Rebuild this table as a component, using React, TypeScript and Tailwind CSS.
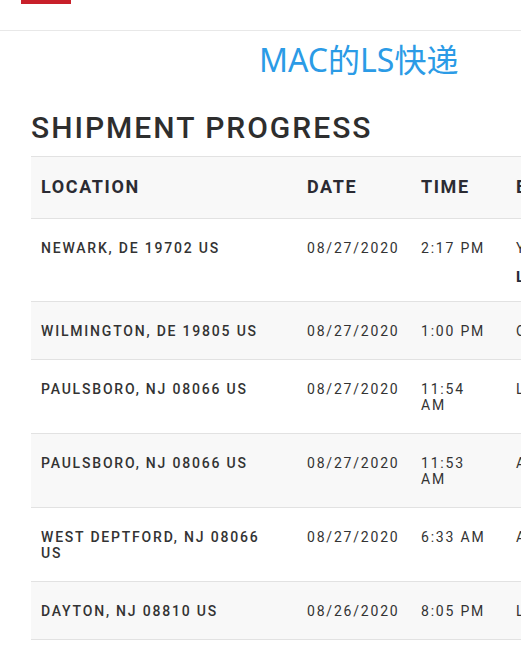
import React from "react";

type Row = {
  location: string;
  date: string;
  time: string;
  activity: string;
  note?: string;
};

const rows: Row[] = [
  { location: "NEWARK, DE 19702 US", date: "08/27/2020", time: "2:17 PM", activity: "YOUR PACKAGE WAS DELIVERED", note: "LEFT AT: FRONT DOOR" },
  { location: "WILMINGTON, DE 19805 US", date: "08/27/2020", time: "1:00 PM", activity: "OUT FOR DELIVERY" },
  { location: "PAULSBORO, NJ 08066 US", date: "08/27/2020", time: "11:54 AM", activity: "LOADED ON DELIVERY VEHICLE" },
  { location: "PAULSBORO, NJ 08066 US", date: "08/27/2020", time: "11:53 AM", activity: "ARRIVED AT FACILITY" },
  { location: "WEST DEPTFORD, NJ 08066 US", date: "08/27/2020", time: "6:33 AM", activity: "ARRIVED AT FACILITY" },
  { location: "DAYTON, NJ 08810 US", date: "08/26/2020", time: "8:05 PM", activity: "LEFT FACILITY" },
];

export default function App() {
  return (
    <div className="min-h-screen w-full overflow-hidden bg-white font-['Roboto',sans-serif]">
      {/* top bar */}
      <div className="h-[31px] border-b border-[#e8e8e8]">
        <div className="ml-[21px] h-[4px] w-[50px] bg-[#c8202a]" />
      </div>

      <h1 className="mt-[9px] pl-[259px] text-[32px] leading-[40px] text-[#2b9be6] font-['Noto_Sans','Noto_Sans_CJK_SC',sans-serif] whitespace-nowrap">
        MAC的LS快递
      </h1>

      <h2 className="mt-[30px] pl-[31px] text-[30px] leading-[36px] font-medium tracking-[2px] text-[#2e2e2e] whitespace-nowrap">
        SHIPMENT PROGRESS
      </h2>

      <div className="mt-[10px] pl-[31px]">
        <table className="w-[700px] table-fixed border-collapse text-left">
          <colgroup>
            <col className="w-[266px]" />
            <col className="w-[114px]" />
            <col className="w-[95px]" />
            <col className="w-[225px]" />
          </colgroup>
          <thead>
            <tr className="border-y border-[#e2e2e2] bg-[#f8f8f8]">
              {["LOCATION", "DATE", "TIME", "EVENT"].map((h) => (
                <th
                  key={h}
                  className="px-[10px] pt-[19px] pb-[21px] text-[18px] leading-[21px] font-bold tracking-[1.6px] text-[#2b2b33]"
                >
                  {h}
                </th>
              ))}
            </tr>
          </thead>
          <tbody className="text-[14px] leading-[16px] tracking-[1.8px] text-[#333]">
            {rows.map((r, i) => (
              <tr
                key={i}
                className={`border-b border-[#e2e2e2] align-top ${i % 2 === 1 ? "bg-[#f8f8f8]" : "bg-white"}`}
              >
                <td className="pl-[10px] pr-[18px] pt-[21px] pb-[20px] font-medium">{r.location}</td>
                <td className="px-[10px] pt-[21px] pb-[20px]">{r.date}</td>
                <td className="pl-[10px] pr-[18px] pt-[21px] pb-[20px]">{r.time}</td>
                <td className={`px-[10px] pt-[21px] ${r.note ? "pb-[17px]" : "pb-[20px]"} whitespace-nowrap`}>
                  <div>{r.activity}</div>
                  {r.note && (
                    <div className="mt-[14px] text-[15px] leading-[14px] font-bold text-[#222a3a]">{r.note}</div>
                  )}
                </td>
              </tr>
            ))}
          </tbody>
        </table>
      </div>
    </div>
  );
}
